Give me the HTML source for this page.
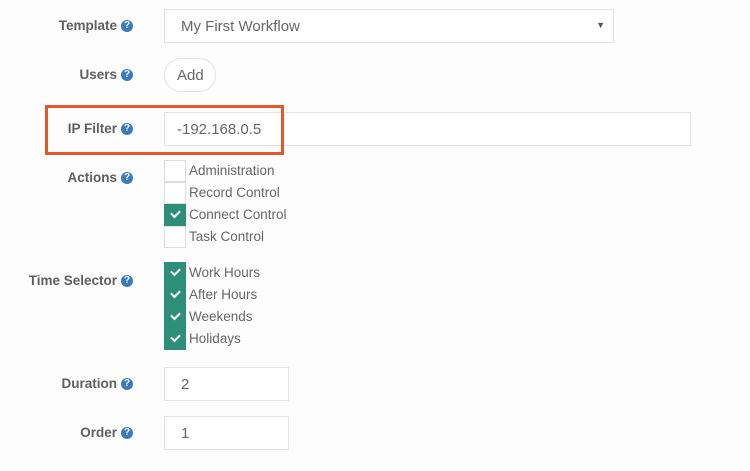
<!DOCTYPE html>
<html><head><style>
body{margin:0;background:#fdfdfd;width:750px;height:471px;position:relative;overflow:hidden;font-family:"Liberation Sans",sans-serif;}
.lbl{position:absolute;right:617px;font-weight:bold;font-size:13.5px;color:#5f5f5f;white-space:nowrap;display:flex;align-items:center;}
.q{display:inline-block;width:12px;height:12px;border-radius:50%;background:#3a7bc0;color:#fff;font-size:10px;font-weight:bold;text-align:center;line-height:12px;margin-left:4px;}
.box{position:absolute;border:1px solid #e3e3e3;background:#fff;box-sizing:border-box;font-size:15px;color:#666;padding-left:16px;display:flex;align-items:center;}
.cb{position:absolute;left:164px;width:22px;height:22px;box-sizing:border-box;border:1px solid #ddd;background:#fff;}
.cb.on{background:#2d8f78;border-color:#2d8f78;}
.cb.on::after{content:"";position:absolute;left:6px;top:5px;width:7px;height:4px;border-left:2px solid #fff;border-bottom:2px solid #fff;transform:rotate(-45deg);}
.ct{position:absolute;left:189px;font-size:13.5px;color:#666;line-height:22px;}
</style></head><body>
<div class="lbl" style="top:18px">Template<span class="q">?</span></div>
<div class="box" style="left:164px;top:9px;width:450px;height:34px;">My First Workflow<span style="position:absolute;right:8px;top:10px;font-size:9px;color:#555">▼</span></div>
<div class="lbl" style="top:67px">Users<span class="q">?</span></div>
<div class="box" style="left:164px;top:58px;width:52px;height:34px;border-radius:17px;padding-left:12px">Add</div>
<div class="lbl" style="top:121px">IP Filter<span class="q">?</span></div>
<div class="box" style="left:164px;top:112px;width:527px;height:34px;padding-left:12px">-192.168.0.5</div>
<div style="position:absolute;left:45px;top:105px;width:239px;height:50px;box-sizing:border-box;border:3px solid #e8562a;"></div>
<div class="lbl" style="top:170px">Actions<span class="q">?</span></div>
<div class="cb" style="top:160px"></div><div class="ct" style="top:160px">Administration</div>
<div class="cb" style="top:182px"></div><div class="ct" style="top:182px">Record Control</div>
<div class="cb on" style="top:204px"></div><div class="ct" style="top:204px">Connect Control</div>
<div class="cb" style="top:226px"></div><div class="ct" style="top:226px">Task Control</div>
<div class="lbl" style="top:273px">Time Selector<span class="q">?</span></div>
<div class="cb on" style="top:262px"></div><div class="ct" style="top:262px">Work Hours</div>
<div class="cb on" style="top:284px"></div><div class="ct" style="top:284px">After Hours</div>
<div class="cb on" style="top:306px"></div><div class="ct" style="top:306px">Weekends</div>
<div class="cb on" style="top:328px"></div><div class="ct" style="top:328px">Holidays</div>
<div class="lbl" style="top:376px">Duration<span class="q">?</span></div>
<div class="box" style="left:164px;top:367px;width:125px;height:34px;">2</div>
<div class="lbl" style="top:425px">Order<span class="q">?</span></div>
<div class="box" style="left:164px;top:416px;width:125px;height:34px;">1</div>
</body></html>
